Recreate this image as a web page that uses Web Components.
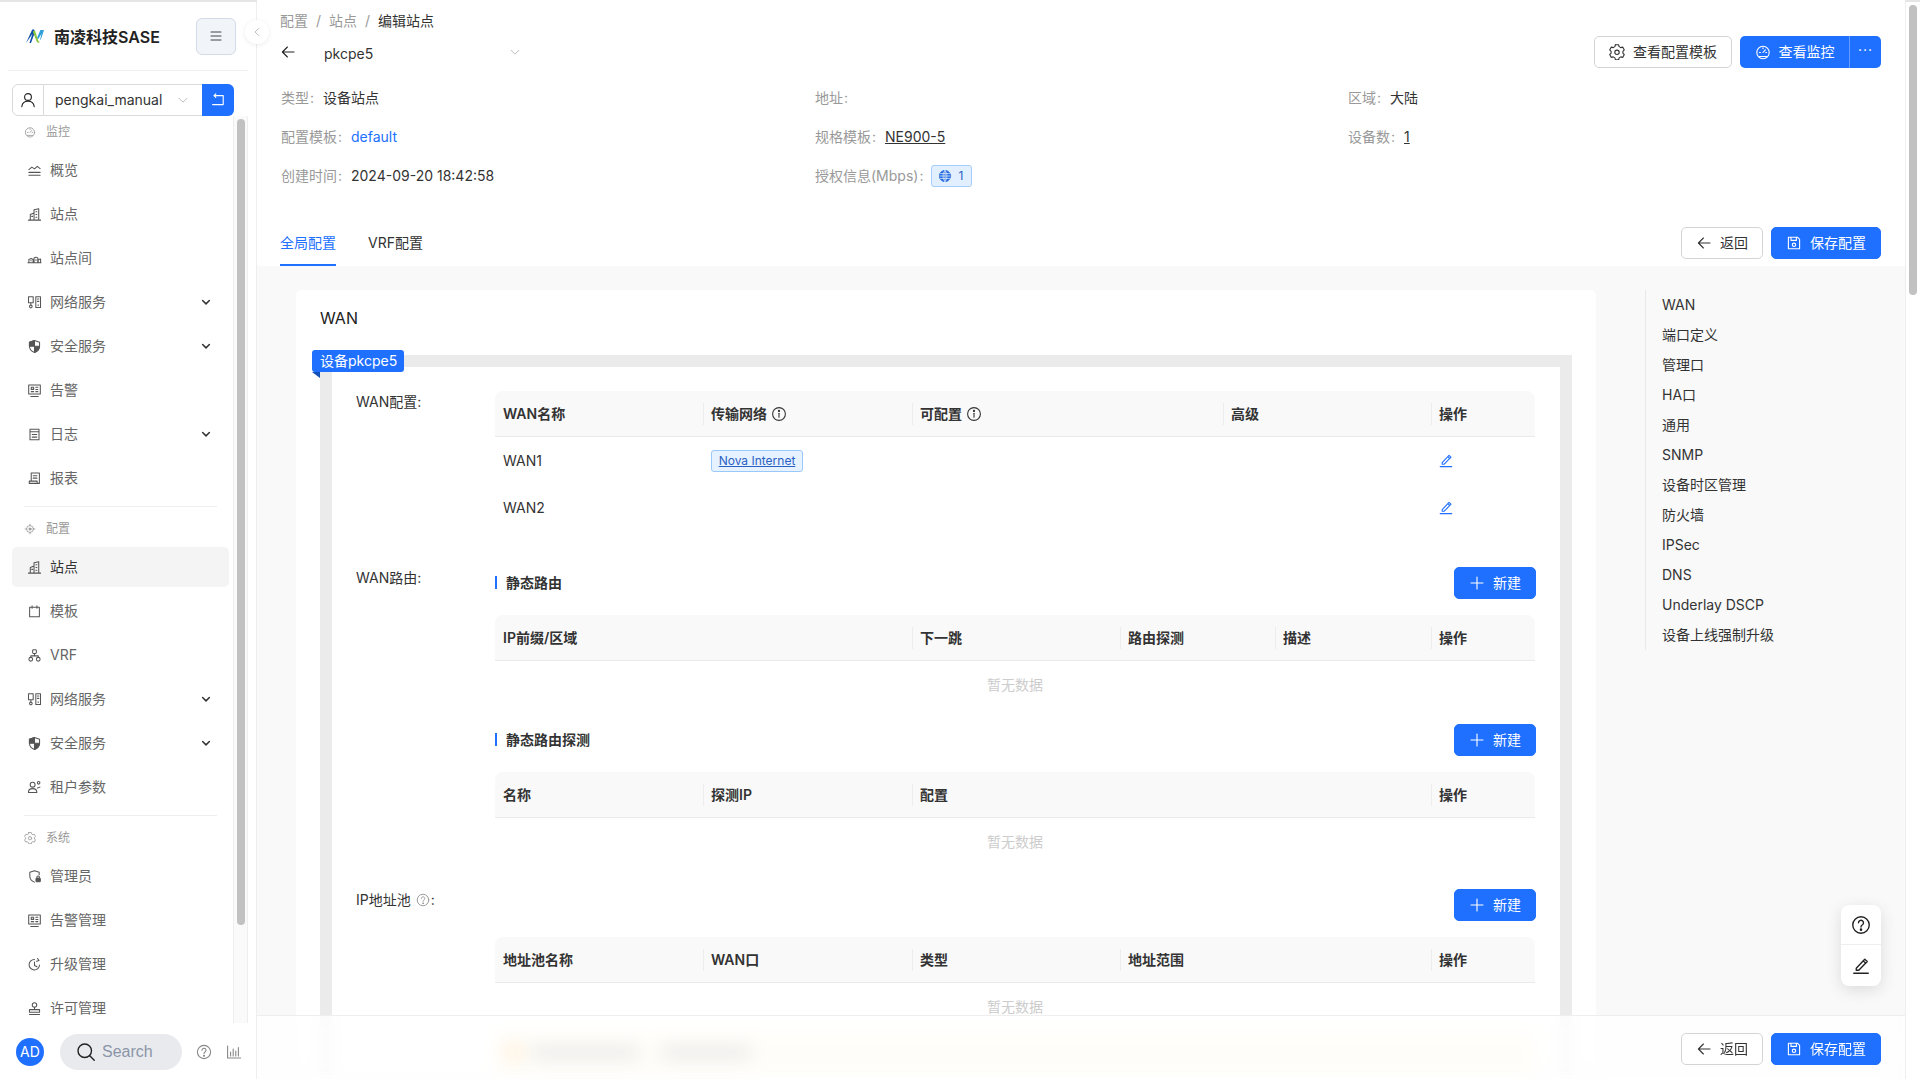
<!DOCTYPE html>
<html lang="zh-CN">
<head>
<meta charset="utf-8">
<title>编辑站点</title>
<style>
  html, body { margin: 0; height: 100%; overflow: hidden; }
  body {
    font: 14px/22px Inter, "Noto Sans CJK SC", sans-serif;
    color: #333;
    background: #fff;
  }
</style>
</head>
<body>
<app-shell>
  <side-nav slot="side">
    <side-group label="监控" icon="gauge"></side-group>
    <side-item icon="overview">概览</side-item>
    <side-item icon="site">站点</side-item>
    <side-item icon="sites">站点间</side-item>
    <side-item icon="net" more>网络服务</side-item>
    <side-item icon="shield" more>安全服务</side-item>
    <side-item icon="alarm">告警</side-item>
    <side-item icon="log" more>日志</side-item>
    <side-item icon="report">报表</side-item>
    <side-group label="配置" icon="target" divider></side-group>
    <side-item icon="site" active>站点</side-item>
    <side-item icon="template">模板</side-item>
    <side-item icon="vrf">VRF</side-item>
    <side-item icon="net" more>网络服务</side-item>
    <side-item icon="shield" more>安全服务</side-item>
    <side-item icon="tenant">租户参数</side-item>
    <side-group label="系统" icon="gear" divider></side-group>
    <side-item icon="admin">管理员</side-item>
    <side-item icon="alarm">告警管理</side-item>
    <side-item icon="upgrade">升级管理</side-item>
    <side-item icon="license">许可管理</side-item>
  </side-nav>

  <page-head slot="main"></page-head>
  <page-body slot="main">
    <config-card title="WAN" device="设备pkcpe5">
      <form-row label="WAN配置:">
        <data-table cols="208 209 311 208 104" heads="WAN名称|传输网络 *|可配置 *|高级|操作">
          <wan-row name="WAN1" net="Nova Internet"></wan-row>
          <wan-row name="WAN2"></wan-row>
        </data-table>
      </form-row>
      <form-row label="WAN路由:" gap="36">
        <sub-head mark>静态路由</sub-head>
        <data-table cols="417 208 155 156 104" heads="IP前缀/区域|下一跳|路由探测|描述|操作"><empty-row></empty-row></data-table>
        <sub-head mark style="margin-top:16px">静态路由探测</sub-head>
        <data-table cols="208 209 519 104" heads="名称|探测IP|配置|操作"><empty-row></empty-row></data-table>
      </form-row>
      <form-row label="IP地址池" hint gap="24">
        <sub-head></sub-head>
        <data-table cols="208 209 208 311 104" heads="地址池名称|WAN口|类型|地址范围|操作"><empty-row></empty-row></data-table>
        <blur-alert></blur-alert>
      </form-row>
    </config-card>
    <anchor-nav items="WAN|端口定义|管理口|HA口|通用|SNMP|设备时区管理|防火墙|IPSec|DNS|Underlay DSCP|设备上线强制升级"></anchor-nav>
  </page-body>
  <float-tools slot="main"></float-tools>
  <foot-bar slot="main"></foot-bar>
</app-shell>

<script>
const line = 'fill="none" stroke="currentColor" stroke-width="1.1" stroke-linecap="round" stroke-linejoin="round"'
const glyphs = {
  gauge: '<circle cx="8" cy="8.5" r="6.2"/><path d="M8 8.5l2.4-2.6M4.4 8.5h1M10.8 8.5h.8M8 3.8v1"/><path d="M4.5 12.5h7"/>',
  overview: '<path d="M2 7l3.2-2.6 2.8 1.8L11 3.5 14 6M2 10h12M2 13h12"/>',
  site: '<path d="M1.5 14h13M3.5 14V8l4-1.5M7.5 14V3l5-1.2V14M9.5 5h1M9.5 8h1M9.5 11h1M5 10h1"/>',
  sites: '<path d="M1 12.5h14M2 12.5V9l2.5-1L6.5 9v3.5M7.5 12.5V7.5l2-1 2 1v5M12 12.5V9l2.5-.5v4M4 10.5h.5M9 9.5h1"/>',
  net: '<path d="M1.6 1.8h5v6.4h-5zM9.4 1.8h5v11.6h-5zM4.1 8.2v2.6M4.1 13.6a1.4 1.4 0 1 0 0-2.8 1.4 1.4 0 0 0 0 2.8zM11.2 4.2h1.4M11.2 6.8h1.4M11.9 10.4v.8"/>',
  shield: '<path d="M8 1.6l5.4 1.8v4.2c0 3.2-2.4 5.6-5.4 6.8-3-1.2-5.4-3.6-5.4-6.8V3.4z"/><path d="M8 1.6L2.6 3.4v4.4H8zM8 7.8h5.4c-.2 3-2.4 5.4-5.4 6.6z" fill="currentColor"/>',
  alarm: '<path d="M1.8 2.2h12.4v9.6H1.8zM4 14.3h8M4.5 4.6h2.6v2.2H4.5zM4.5 9.2h2.6M9.4 4.6h2.2M9.4 7h2.2M9.4 9.2h2.2"/>',
  log: '<path d="M3.2 2.4h9.6v11.2H3.2zM3.2 5h9.6M5.6 8h4.8M5.6 10.8h4.8"/>',
  report: '<path d="M4.5 2.2h8.7v11H2.4v-2.4h8.4v2.4M4.5 2.2v8.6M6.6 5h4M6.6 7.6h4"/>',
  target: '<circle cx="8" cy="8" r="4.6"/><circle cx="8" cy="8" r="1.5" fill="currentColor"/><path d="M8 1.5v2M8 12.5v2M1.5 8h2M12.5 8h2"/>',
  template: '<path d="M2.8 3.4h10.4v10.2H2.8zM5.4 2v2.6M10.6 2v2.6"/>',
  vrf: '<rect x="6" y="1.8" width="4" height="4" rx="1"/><circle cx="4" cy="12" r="2"/><circle cx="12" cy="12" r="2"/><path d="M8 5.8v2.6M4 10V8.4h8V10"/>',
  tenant: '<circle cx="6" cy="5" r="2.6"/><path d="M1.5 13.4c0-3 2-4.2 4.5-4.2s4.5 1.2 4.5 4.2zM11.2 8.6l2.6-1M12.4 4.4a1.4 1.4 0 1 0 0-2.8 1.4 1.4 0 0 0 0 2.8z"/>',
  gear: '<path d="M6.4 1.6h3.2l.5 1.9 1.7 1 1.9-.5 1.6 2.8-1.4 1.4v1.9l1.4 1.4-1.6 2.8-1.9-.5-1.7 1-.5 1.9" transform="translate(0 -.9)"/><path d="M6.4 1.6l-.5 1.9-1.7 1L2.3 4 .7 6.8l1.4 1.4v1.9L.7 11.5l1.6 2.8 1.9-.5 1.7 1 .5 1.9h3.2" transform="translate(0 -.9)"/><circle cx="8" cy="8.3" r="2.2"/>',
  admin: '<path d="M13 6V3.4L8 1.8 3 3.4v4.2c0 3 2 5.2 5 6.4"/><rect x="9.6" y="9.8" width="4.6" height="3.8" rx=".8" fill="currentColor"/><circle cx="11.9" cy="8.9" r="1.4"/>',
  upgrade: '<path d="M13.4 8.6A5.6 5.6 0 1 1 8 2.6M8 5.4V9l2.6 1.4M11.2 1.6l1.6 2.2-2.6.8"/>',
  license: '<circle cx="8" cy="4.2" r="2.4"/><path d="M8 6.6v2.6M2.6 9.2h10.8v2.8H2.6zM2.6 14.4h10.8"/>',
  user: '<circle cx="8" cy="5" r="3.4"/><path d="M1.8 14.6c.4-3.6 2.8-5.4 6.2-5.4s5.8 1.8 6.2 5.4"/>',
  chev: '<path d="M3.5 6l4.5 4.5L12.5 6"/>',
  swap: '<path d="M4 3.6h9.2v9H2.6M5.8 1.8L4 3.6l1.8 1.8"/>',
  menu: '<path d="M3 4h10M3 8h10M3 12h10"/>',
  back: '<path d="M14 8H2.4M7.4 3L2.4 8l5 5"/>',
  plus: '<path d="M8 2v12M2 8h12"/>',
  save: '<path d="M2.4 2.2h9l2.2 2.2v9.4H2.4zM5 2.2v3.2h5.4V2.2"/><circle cx="8" cy="9.8" r="1.7"/>',
  info: '<circle cx="8" cy="8" r="6.4"/><path d="M8 7.2v4"/><circle cx="8" cy="4.9" r=".6" fill="currentColor"/>',
  help: '<circle cx="8" cy="8" r="6.6"/><path d="M6 6.2a2 2 0 1 1 3 1.8c-.7.4-1 .8-1 1.6"/><circle cx="8" cy="11.7" r=".5" fill="currentColor"/>',
  pen: '<path d="M4.2 10.6L11 3.4l2 1.8-6.8 7H4.2zM9.8 4.7l2 1.9M2.2 14.6h11.6"/>',
  search: '<circle cx="7" cy="7" r="5.4"/><path d="M11 11l3.6 3.6"/>',
  chart: '<path d="M1.6 2v12h13M4.6 12V8M7.2 12V5M9.8 12V7M12.4 12V3.6"/>',
  globe: '<circle cx="8" cy="8" r="6.4" fill="#2a6fe0" stroke="#2a6fe0"/><path d="M2 8h12M2.8 5.2h10.4M2.8 10.8h10.4M8 1.8v12.4M8 1.8C5 5 5 11 8 14.2M8 1.8c3 3.2 3 9.2 0 12.4" stroke="#fff" stroke-width=".7"/>'
}
const icon = (name, size = 16) => `<svg width="${size}" height="${size}" viewBox="0 0 16 16" ${line} style="display:block;flex:none">${glyphs[name]}</svg>`

class AppShell extends HTMLElement {
  constructor() {
    super()
    this.attachShadow({mode: "open"})
    this.shadowRoot.innerHTML = `
      <style>
        :host { display: flex; height: 1079px; box-sizing: border-box; border-top: 2px solid #e6e6e6; }
        .side { width: 257px; flex: none; box-sizing: border-box; border-right: 1px solid #eee; position: relative; }
        .main { width: 1648px; flex: none; display: flex; flex-direction: column; position: relative; overflow: hidden; margin-top: -2px; }
        .bar { flex: 1; border-left: 1px solid #eee; padding: 3px 3px 0 3px; background: #fff; }
        .thumb { height: 290px; background: #c1c1c1; border-radius: 4px; }
        .fold {
          position: absolute; right: -13px; top: 18px; width: 24px; height: 24px; border-radius: 50%;
          background: #fff; box-shadow: 0 1px 5px rgba(0,0,0,.08); color: #aaa; z-index: 2;
          display: flex; align-items: center; justify-content: center;
        }
        .fold svg { transform: rotate(90deg); }
      </style>
      <div class="side"><slot name="side"></slot><div class="fold">${icon("chev", 12)}</div></div>
      <div class="main"><slot name="main"></slot></div>
      <div class="bar"><div class="thumb"></div></div>
    `
  }
}

class SideNav extends HTMLElement {
  constructor() {
    super()
    this.attachShadow({mode: "open"})
    this.shadowRoot.innerHTML = `
      <style>
        :host { display: flex; flex-direction: column; height: 1077px; }
        .brand {
          height: 69px; margin: 0 8px; border-bottom: 1px solid #eee; flex: none;
          display: flex; align-items: center; padding: 0 12px 0 18px; box-sizing: border-box;
        }
        .brand b { font-weight: 600; font-size: 16px; color: #222; margin-left: 10px; flex: 1; position: relative; top: 1px; }
        .toggle {
          width: 40px; height: 37px; box-sizing: border-box; border: 1px solid #d3dbe6; border-radius: 6px;
          background: #f1f5fa; color: #444; display: flex; align-items: center; justify-content: center; margin-right: 0;
        }
        .picker {
          margin: 13px 0 0 12px; width: 222px; height: 32px; box-sizing: border-box; display: flex; flex: none;
          border: 1px solid #d9d9d9; border-radius: 6px;
        }
        .who { width: 30px; border-right: 1px solid #d9d9d9; color: #222; display: flex; align-items: center; justify-content: center; }
        .name { flex: 1; padding-left: 11px; line-height: 30px; color: #333; }
        .arrow { width: 30px; color: #bbb; display: flex; align-items: center; justify-content: center; margin-right: 4px; }
        .go {
          width: 32px; margin: -1px -1px -1px 0; background: #2070ff; color: #fff; border-radius: 0 6px 6px 0;
          display: flex; align-items: center; justify-content: center;
        }
        .scroll { flex: 1; min-height: 0; display: flex; overflow: hidden; }
        .list { width: 233px; flex: none; display: flex; flex-direction: column; }
        .track { width: 15px; box-sizing: border-box; border-left: 1px solid #eee; border-right: 1px solid #eee; padding: 3px 2px 0 3px; background: #fafafa; }
        .track div { height: 806px; background: #c1c1c1; border-radius: 4px; }
        .foot { height: 55px; flex: none; display: flex; align-items: center; padding: 1px 0 0 16px; }
        .avatar {
          width: 28px; height: 28px; border-radius: 50%; background: #2070ff; color: #fff; font-size: 14px;
          display: flex; align-items: center; justify-content: center;
        }
        .search {
          width: 122px; height: 36px; margin-left: 16px; border-radius: 18px; background: #e8eaee; box-sizing: border-box;
          display: flex; align-items: center; padding-left: 16px; gap: 6px; font-size: 16px; color: #8b95a8; font-family: "Liberation Sans", sans-serif;
        }
        .search svg { color: #222; }
        .tool { color: #888; margin-left: 14px; }
      </style>
      <div class="brand">
        <svg width="18" height="14" viewBox="0 0 18 14">
          <path d="M0 14L6 1c.5-1 1.6-1 2.2 0L9 3 5 14H3.4L6.4 5z" fill="#0f4fa8"/>
          <path d="M6.8 2.4L9 1.4 12 11c.2 1 1 2 2 2-1.4 1.2-3 .8-3.6-1z" fill="#8cc63f"/>
          <path d="M11 9l3.4-8H18l-2.4 7.4c-.6 2-2 3-2 3 .6-1 1-2.8 1.8-6.4-.8 1-2 3.2-3 5z" fill="#2f9fd8"/>
        </svg>
        <b>南凌科技SASE</b>
        <div class="toggle">${icon("menu")}</div>
      </div>
      <div class="picker">
        <div class="who">${icon("user")}</div>
        <div class="name">pengkai_manual</div>
        <div class="arrow">${icon("chev", 14)}</div>
        <div class="go">${icon("swap")}</div>
      </div>
      <div class="scroll">
        <div class="list"><slot></slot></div>
        <div class="track"><div></div></div>
      </div>
      <div class="foot">
        <div class="avatar">AD</div>
        <div class="search">${icon("search", 20)}<span>Search</span></div>
        <div class="tool">${icon("help")}</div>
        <div class="tool">${icon("chart")}</div>
      </div>
    `
  }
}

class SideGroup extends HTMLElement {
  constructor() {
    super()
    this.attachShadow({mode: "open"})
    const rule = this.hasAttribute("divider") ? '<div class="rule"></div>' : ""
    this.shadowRoot.innerHTML = `
      <style>
        :host { display: block; flex: none; }
        .rule { height: 1px; background: #eee; margin: 6px 16px 6px 24px; }
        .label { height: 32px; display: flex; align-items: center; padding-left: 24px; gap: 10px; font-size: 12px; color: #999; }
      </style>
      ${rule}
      <div class="label">${icon(this.getAttribute("icon"), 12)}<span>${this.getAttribute("label")}</span></div>
    `
  }
}

class SideItem extends HTMLElement {
  constructor() {
    super()
    this.attachShadow({mode: "open"})
    const more = this.hasAttribute("more") ? `<span class="more">${icon("chev", 12)}</span>` : ""
    this.shadowRoot.innerHTML = `
      <style>
        :host {
          display: flex; flex: none; align-items: center; height: 40px; margin: 2px 4px 2px 12px; padding-left: 15px; border-radius: 5px;
          color: #666; gap: 8px;
        }
        :host([active]) { background: #f4f4f4; color: #333; }
        svg { color: #555; }
        .text { flex: 1; }
        .more { margin-right: 17px; }
        .more svg { color: #333; stroke-width: 2; }
      </style>
      ${icon(this.getAttribute("icon"), 15)}
      <span class="text"><slot></slot></span>
      ${more}
    `
  }
}

class UiButton extends HTMLElement {
  constructor() {
    super()
    this.attachShadow({mode: "open"})
    this.shadowRoot.innerHTML = `
      <style>
        :host {
          display: inline-flex; align-items: center; justify-content: center; gap: 8px; height: 32px; box-sizing: border-box;
          padding: 0 14px; border: 1px solid #d4d4d4; border-radius: 5px; color: #333; background: #fff; white-space: nowrap;
        }
        :host([primary]) { background: #2070ff; border-color: #2070ff; color: #fff; }
      </style>
      ${icon(this.getAttribute("icon"))}<slot></slot>
    `
  }
}

class PageHead extends HTMLElement {
  constructor() {
    super()
    this.attachShadow({mode: "open"})
    const info = (label, value) => `<div class="cell"><span class="k">${label}<i>:</i></span>${value}</div>`
    this.shadowRoot.innerHTML = `
      <style>
        :host { display: block; height: 266px; flex: none; box-sizing: border-box; padding: 11px 24px 0 23px; background: #fff; }
        .crumb { display: flex; height: 20px; line-height: 20px; gap: 8px; color: #999; }
        .crumb b { font-weight: 400; color: #333; }
        .title { display: flex; align-items: center; height: 32px; margin-top: 5px; }
        .title .backer { color: #222; }
        .title .name { margin-left: 28px; width: 184px; color: #333; padding-top: 3px; }
        .title .arrow { color: #bbb; }
        .actions { margin-left: auto; display: flex; gap: 8px; }
        .split { display: flex; height: 32px; background: #2070ff; border-radius: 5px; color: #fff; }
        .split .a { width: 109px; display: flex; align-items: center; justify-content: center; gap: 8px; border-right: 1px solid rgba(255,255,255,.3); }
        .split .b { width: 31px; display: flex; align-items: center; justify-content: center; letter-spacing: 1px; padding-bottom: 4px; box-sizing: border-box; }
        .info {
          display: grid; grid-template-columns: 534px 533px 1fr; row-gap: 17px; margin: 19px 0 0 1px;
        }
        .cell { height: 22px; display: flex; align-items: center; }
        .k { color: #999; }
        .k i { font-style: normal; display: inline-block; width: 13px; padding-left: 1px; }
        .link { color: #2070ff; }
        u { color: #333; }
        .lic {
          display: inline-flex; align-items: center; gap: 6px; height: 22px; width: 41px; padding-left: 6px; box-sizing: border-box;
          background: #e2effe; border: 1px solid #a6cdfb; border-radius: 3px; color: #2a5fc4; font-size: 12px; margin-left: -1px;
        }
        .tabs { display: flex; align-items: flex-start; margin-top: 40px; height: 39px; }
        .tab { height: 39px; box-sizing: border-box; line-height: 32px; margin-right: 32px; }
        .tab.on { color: #2070ff; border-bottom: 2px solid #2070ff; }
        .right { margin-left: auto; display: flex; gap: 8px; }
      </style>
      <div class="crumb"><span>配置</span><span>/</span><span>站点</span><span>/</span><b>编辑站点</b></div>
      <div class="title">
        <span class="backer">${icon("back")}</span>
        <span class="name">pkcpe5</span>
        <span class="arrow">${icon("chev", 14)}</span>
        <div class="actions">
          <ui-button icon="gear">查看配置模板</ui-button>
          <div class="split"><span class="a">${icon("gauge")}查看监控</span><span class="b">···</span></div>
        </div>
      </div>
      <div class="info">
        ${info("类型", "设备站点")}
        ${info("地址", "")}
        ${info("区域", "大陆")}
        ${info("配置模板", '<span class="link">default</span>')}
        ${info("规格模板", "<u>NE900-5</u>")}
        ${info("设备数", "<u>1</u>")}
        ${info("创建时间", "2024-09-20 18:42:58")}
        ${info("授权信息(Mbps)", `<span class="lic">${icon("globe", 14)}1</span>`)}
      </div>
      <div class="tabs">
        <div class="tab on">全局配置</div>
        <div class="tab">VRF配置</div>
        <div class="right">
          <ui-button icon="back">返回</ui-button>
          <ui-button icon="save" primary>保存配置</ui-button>
        </div>
      </div>
    `
  }
}

class PageBody extends HTMLElement {
  constructor() {
    super()
    this.attachShadow({mode: "open"})
    this.shadowRoot.innerHTML = `
      <style>
        :host { display: flex; align-items: flex-start; flex: 1; min-height: 0; overflow: hidden; background: #f9f9f9; padding: 24px 0 0 39px; }
      </style>
      <slot></slot>
    `
  }
}

class ConfigCard extends HTMLElement {
  constructor() {
    super()
    this.attachShadow({mode: "open"})
    this.shadowRoot.innerHTML = `
      <style>
        :host { display: block; width: 1300px; flex: none; box-sizing: border-box; padding: 16px 24px 0; background: #fff; border-radius: 6px 6px 0 0; }
        h2 { margin: 0; font: 400 16px/24px Inter, "Noto Sans CJK SC", sans-serif; color: #222; }
        .box { position: relative; margin-top: 25px; border: 12px solid #ebebeb; border-bottom: 0; padding: 24px 25px 0 24px; background: #fff; }
        .tag {
          position: absolute; left: -20px; top: -17px; height: 22px; line-height: 22px; padding: 0 8px; width: 92px; box-sizing: border-box;
          background: #2070ff; color: #fff; border-radius: 3px; white-space: nowrap;
        }
        .tag::after {
          content: ""; position: absolute; left: 0; top: 100%; width: 8px; height: 6px; background: #134fb8;
          clip-path: polygon(0 0, 100% 0, 100% 100%);
        }
      </style>
      <h2>${this.getAttribute("title")}</h2>
      <div class="box">
        <div class="tag">${this.getAttribute("device")}</div>
        <slot></slot>
      </div>
    `
    this.removeAttribute("title")
  }
}

class FormRow extends HTMLElement {
  constructor() {
    super()
    this.attachShadow({mode: "open"})
    const hint = this.hasAttribute("hint") ? `<span class="hint">${icon("help", 14)}</span>:` : ""
    this.shadowRoot.innerHTML = `
      <style>
        :host { display: flex; margin-top: ${this.getAttribute("gap") || 0}px; }
        .label { width: 139px; flex: none; display: flex; align-items: center; height: 22px; color: #333; }
        .hint { color: #999; margin: 0 1px 0 5px; }
        .body { width: 1040px; flex: none; }
      </style>
      <div class="label">${this.getAttribute("label")}${hint}</div>
      <div class="body"><slot></slot></div>
    `
  }
}

class SubHead extends HTMLElement {
  constructor() {
    super()
    this.attachShadow({mode: "open"})
    this.shadowRoot.innerHTML = `
      <style>
        :host { display: flex; align-items: center; height: 32px; font-weight: 600; color: #333; }
        :host([mark]) .t { border-left: 2px solid #2070ff; padding-left: 9px; height: 13px; line-height: 13px; margin-top: -2px; }
        ui-button { margin-left: auto; margin-right: -1px; font-weight: 400; }
      </style>
      <span class="t"><slot></slot></span>
      <ui-button icon="plus" primary>新建</ui-button>
    `
  }
}

class DataTable extends HTMLElement {
  constructor() {
    super()
    this.attachShadow({mode: "open"})
    const cols = this.getAttribute("cols").split(" ").map(c => c + "px").join(" ")
    const heads = this.getAttribute("heads").split("|").map(h => {
      const tip = h.endsWith(" *")
      const text = tip ? h.slice(0, -2) : h
      return `<div class="th">${text}${tip ? icon("info") : ""}</div>`
    }).join("")
    this.shadowRoot.innerHTML = `
      <style>
        :host { display: block; margin-top: 16px; }
        :host(:first-child) { margin-top: 0; }
        .head {
          display: grid; grid-template-columns: ${cols}; height: 46px; box-sizing: border-box;
          background: #f9f9f9; border-bottom: 1px solid #eaeaea; border-radius: 8px 8px 0 0;
        }
        .th {
          display: flex; align-items: center; gap: 4px; padding-left: 8px; font-weight: 600; color: #333;
          background: linear-gradient(#ededed, #ededed) left center / 1px 22px no-repeat;
        }
        .th:first-child { background: none; }
        .th svg { color: #333; }
      </style>
      <div class="head">${heads}</div>
      <slot></slot>
    `
  }
}

class WanRow extends HTMLElement {
  constructor() {
    super()
    this.attachShadow({mode: "open"})
    const net = this.getAttribute("net")
    this.shadowRoot.innerHTML = `
      <style>
        :host { display: grid; grid-template-columns: 208px 832px; height: 47px; align-items: center; color: #333; }
        .name { padding-left: 8px; }
        .net { display: flex; align-items: center; justify-content: space-between; padding: 0 0 0 8px; }
        .chip {
          height: 22px; width: 92px; box-sizing: border-box; text-align: center; line-height: 20px; font-size: 12px;
          background: #e6f2ff; border: 1px solid #99c8fa; border-radius: 3px; color: #2a5fc4; text-decoration: underline;
        }
        .pen { color: #2070ff; margin: -2px 81px 0 auto; }
      </style>
      <div class="name">${this.getAttribute("name")}</div>
      <div class="net">${net ? `<span class="chip">${net}</span>` : ""}<span class="pen">${icon("pen")}</span></div>
    `
  }
}

class EmptyRow extends HTMLElement {
  constructor() {
    super()
    this.attachShadow({mode: "open"})
    this.shadowRoot.innerHTML = `
      <style>
        :host { display: flex; align-items: center; justify-content: center; height: 47px; color: #ccc; }
      </style>
      暂无数据
    `
  }
}

class BlurAlert extends HTMLElement {
  constructor() {
    super()
    this.attachShadow({mode: "open"})
    this.shadowRoot.innerHTML = `
      <style>
        :host { display: flex; align-items: center; gap: 8px; height: 40px; margin-top: 2px; padding-left: 10px; background: #fff8e8; border-radius: 4px; }
        .dot { width: 18px; height: 16px; background: #fbc97c; border-radius: 4px; }
        .bar { height: 11px; background: #a9a9a9; border-radius: 5px; }
      </style>
      <span class="dot"></span><span class="bar" style="width:108px"></span><span class="bar" style="width:90px;margin-left:14px"></span>
    `
  }
}

class AnchorNav extends HTMLElement {
  constructor() {
    super()
    this.attachShadow({mode: "open"})
    const rows = this.getAttribute("items").split("|").map(t => `<div>${t}</div>`).join("")
    this.shadowRoot.innerHTML = `
      <style>
        :host { display: block; width: 230px; flex: none; margin-left: 49px; border-left: 1px solid #e8e8e8; padding-left: 16px; height: 360px; box-sizing: border-box; color: #333; }
        div { height: 30px; line-height: 30px; }
      </style>
      ${rows}
    `
  }
}

class FloatTools extends HTMLElement {
  constructor() {
    super()
    this.attachShadow({mode: "open"})
    this.shadowRoot.innerHTML = `
      <style>
        :host {
          position: absolute; right: 24px; top: 905px; width: 40px; height: 81px; z-index: 3; background: #fff; border-radius: 8px;
          box-shadow: 0 4px 16px rgba(0,0,0,.12); display: flex; flex-direction: column; color: #222;
        }
        div { flex: 1; display: flex; align-items: center; justify-content: center; }
        div + div { border-top: 1px solid #eee; padding-bottom: 2px; box-sizing: border-box; }
      </style>
      <div>${icon("help", 20)}</div>
      <div>${icon("pen", 20)}</div>
    `
  }
}

class FootBar extends HTMLElement {
  constructor() {
    super()
    this.attachShadow({mode: "open"})
    this.shadowRoot.innerHTML = `
      <style>
        :host {
          position: absolute; left: 0; right: 0; top: 1015px; height: 64px; box-sizing: border-box; z-index: 2;
          display: flex; justify-content: flex-end; gap: 8px; padding: 17px 24px 0 0;
          border-top: 1px solid #eee; background: rgba(255,255,255,.72); backdrop-filter: blur(9px);
        }
      </style>
      <ui-button icon="back">返回</ui-button>
      <ui-button icon="save" primary>保存配置</ui-button>
    `
  }
}

customElements.define("ui-button", UiButton)
customElements.define("app-shell", AppShell)
customElements.define("side-nav", SideNav)
customElements.define("side-group", SideGroup)
customElements.define("side-item", SideItem)
customElements.define("page-head", PageHead)
customElements.define("page-body", PageBody)
customElements.define("config-card", ConfigCard)
customElements.define("form-row", FormRow)
customElements.define("sub-head", SubHead)
customElements.define("data-table", DataTable)
customElements.define("wan-row", WanRow)
customElements.define("empty-row", EmptyRow)
customElements.define("blur-alert", BlurAlert)
customElements.define("anchor-nav", AnchorNav)
customElements.define("float-tools", FloatTools)
customElements.define("foot-bar", FootBar)
</script>
</body>
</html>
